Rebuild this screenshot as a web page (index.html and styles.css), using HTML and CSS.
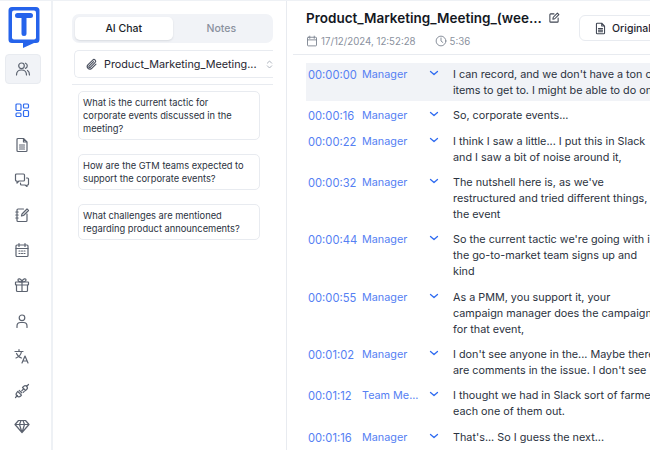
FILE: index.html
```html
<!DOCTYPE html>
<html lang="en">
<head>
    <meta charset="UTF-8">
    <title>Transcript</title>
    <link rel="stylesheet" href="styles.css">
</head>
<body>
    <div class="app">
        <nav class="sidebar">
            <svg class="logo" width="32" height="42" viewBox="0 0 32 42">
                <path d="M4 1h24a3.500 3.500 0 0 1 3.500 3.500v29a3.500 3.500 0 0 1-3.500 3.500h-2l-11 5v-5H4a3.500 3.500 0 0 1-3.500-3.500v-29A3.500 3.500 0 0 1 4 1z" fill="#2563eb"/>
                <rect x="4" y="4.500" width="24" height="29" rx="2" fill="#fff"/>
                <path d="M9.500 7h13a2.500 2.500 0 0 1 0 5h-4v15.500a2.500 2.500 0 0 1-5 0V12h-4a2.500 2.500 0 0 1 0-5z" fill="#2563eb"/>
            </svg>
            <div class="nav-active">
                <svg class="icon" viewBox="0 0 16 16"><circle cx="6.500" cy="4.800" r="2.800"/><path d="M1.500 14c0-3 2-5 5-5s5 2 5 5M10.500 2.200a2.800 2.800 0 0 1 0 5.200M12.500 9.500c1.300.8 2 2.400 2 4.500"/></svg>
            </div>
            <div class="nav-list">
                <svg class="icon icon-blue" viewBox="0 0 16 16"><rect x="2" y="2" width="5" height="6.500" rx="1"/><rect x="9.500" y="2" width="5" height="4" rx="1"/><rect x="2" y="11" width="5" height="3.500" rx="1"/><rect x="9.500" y="8.500" width="5" height="6" rx="1"/></svg>
                <svg class="icon" viewBox="0 0 16 16"><path d="M3 2.500a1 1 0 0 1 1-1h5.500L13 5v8.500a1 1 0 0 1-1 1H4a1 1 0 0 1-1-1zM9.500 1.500V5H13M5.500 8h5M5.500 10h5M5.500 12h5"/></svg>
                <svg class="icon" viewBox="0 0 16 16"><path d="M1.500 3a1 1 0 0 1 1-1h7a1 1 0 0 1 1 1v5a1 1 0 0 1-1 1H5l-2 2V9h-.5a1 1 0 0 1-1-1zM12.500 6h1a1 1 0 0 1 1 1v5a1 1 0 0 1-1 1H13v1.500L11 13H7.500a1 1 0 0 1-1-1v-1"/></svg>
                <svg class="icon" viewBox="0 0 16 16"><path d="M9.500 2H4a1 1 0 0 0-1 1v10.500a1 1 0 0 0 1 1h8a1 1 0 0 0 1-1V7M1.800 5h2.400M1.800 8h2.400M1.800 11h2.400M7.500 9l.5-2L13 2l1.500 1.500-5 5z"/></svg>
                <svg class="icon" viewBox="0 0 16 16"><rect x="2" y="3" width="12" height="11.500" rx="1"/><path d="M2 6.500h12M5 1.500v3M11 1.500v3M5 9h1M7.500 9h1M10 9h1M5 11.500h1M7.500 11.500h1M10 11.500h1"/></svg>
                <svg class="icon" viewBox="0 0 16 16"><rect x="1.500" y="5" width="13" height="3" rx=".5"/><path d="M2.500 8v5.500a1 1 0 0 0 1 1h9a1 1 0 0 0 1-1V8M8 5v9.500M8 5C6 5 4 4.500 4 3s3-2 4 2c1-4 4-3.500 4-2s-2 2-4 2"/></svg>
                <svg class="icon" viewBox="0 0 16 16"><circle cx="8" cy="4.800" r="2.800"/><path d="M3 14.500v-1.500c0-2 1.500-3.500 3.500-3.500h3c2 0 3.500 1.500 3.500 3.500v1.500"/></svg>
                <svg class="icon" viewBox="0 0 16 16"><path d="M1 3.500h8M5 1.500v2M7.500 3.500c-.5 3-3 5.500-5.500 6.500M2.500 5.500c1 2 3 4 5 4.500M8 15l3-7 3 7M9 13h4"/></svg>
                <svg class="icon" viewBox="0 0 16 16"><path d="M1.500 14.500L3.500 12.500M3.800 8.500l3.700 3.700-.8.800a2.600 2.600 0 0 1-3.700-3.700zM5.200 7.300L7.700 9.800M12.500 3.500l2-2M8.500 4.500l3 3 1.200-1.200a2.100 2.100 0 0 0-3-3zM9 6.500L7.700 7.800M10.300 8.300L9.200 9.400"/></svg>
                <svg class="icon" viewBox="0 0 16 16"><path d="M4.500 2.500h7L15 6.500 8 14.500 1 6.500zM1 6.500h14M5.500 6.500L8 14.500l2.500-8M5.500 6.500L7 2.500M10.500 6.500L9 2.500"/></svg>
            </div>
        </nav>

        <section class="chat">
            <div class="tabs">
                <div class="tab tab-active">AI Chat</div>
                <div class="tab">Notes</div>
            </div>
            <div class="file-select">
                <svg class="clip" viewBox="0 0 16 16"><path d="M13.500 7.500l-5.500 5.500a3.200 3.200 0 0 1-4.500-4.500l6-6a2.100 2.100 0 0 1 3 3l-6 6a1 1 0 0 1-1.500-1.500l5.500-5.500"/></svg>
                <span class="file-name">Product_Marketing_Meeting...</span>
                <svg class="updown" viewBox="0 0 8 12"><path d="M1.500 4.500L4 2l2.500 2.500M1.500 7.500L4 10l2.500-2.500"/></svg>
            </div>
            <div class="suggestions">
                <div class="card">What is the current tactic for corporate events discussed in the meeting?</div>
                <div class="card">How are the GTM teams expected to support the corporate events?</div>
                <div class="card">What challenges are mentioned regarding product announcements?</div>
            </div>
        </section>

        <main class="transcript">
            <header class="head">
                <div class="head-info">
                    <div class="title-row">
                        <h1>Product_Marketing_Meeting_(wee...</h1>
                        <svg class="edit" viewBox="0 0 16 16"><path d="M8 2.500H3.500a1 1 0 0 0-1 1v9a1 1 0 0 0 1 1h9a1 1 0 0 0 1-1V8M6.500 9.500l.5-2.500 5.500-5.500 2 2L9 9z"/></svg>
                    </div>
                    <div class="meta">
                        <svg viewBox="0 0 16 16"><rect x="2" y="3" width="12" height="11.500" rx="1"/><path d="M2 6.500h12M5 1.500v3M11 1.500v3"/></svg>
                        <span class="date">17/12/2024, 12:52:28</span>
                        <svg viewBox="0 0 16 16"><circle cx="8" cy="8" r="6.500"/><path d="M8 4v4l2.500 2"/></svg>
                        <span>5:36</span>
                    </div>
                </div>
                <div class="original">
                    <svg viewBox="0 0 16 16"><path d="M3 2.500a1 1 0 0 1 1-1h5.500L13 5v8.500a1 1 0 0 1-1 1H4a1 1 0 0 1-1-1zM9.500 1.500V5H13M5.500 8h5M5.500 10h5M5.500 12h5"/></svg>
                    <span>Original</span>
                </div>
            </header>
            <div class="rows">
                <div class="row row-current">
                    <span class="time">00:00:00</span><span class="speaker">Manager</span>
                    <svg class="chev" viewBox="0 0 10 6"><path d="M1.500 1.500L5 4.500l3.500-3"/></svg>
                    <p>I can record, and we don't have a ton of<br>items to get to. I might be able to do on</p>
                </div>
                <div class="row">
                    <span class="time">00:00:16</span><span class="speaker">Manager</span>
                    <svg class="chev" viewBox="0 0 10 6"><path d="M1.500 1.500L5 4.500l3.500-3"/></svg>
                    <p>So, corporate events...</p>
                </div>
                <div class="row">
                    <span class="time">00:00:22</span><span class="speaker">Manager</span>
                    <svg class="chev" viewBox="0 0 10 6"><path d="M1.500 1.500L5 4.500l3.500-3"/></svg>
                    <p>I think I saw a little... I put this in Slack<br>and I saw a bit of noise around it,</p>
                </div>
                <div class="row">
                    <span class="time">00:00:32</span><span class="speaker">Manager</span>
                    <svg class="chev" viewBox="0 0 10 6"><path d="M1.500 1.500L5 4.500l3.500-3"/></svg>
                    <p>The nutshell here is, as we've<br>restructured and tried different things,<br>the event</p>
                </div>
                <div class="row">
                    <span class="time">00:00:44</span><span class="speaker">Manager</span>
                    <svg class="chev" viewBox="0 0 10 6"><path d="M1.500 1.500L5 4.500l3.500-3"/></svg>
                    <p>So the current tactic we're going with is<br>the go-to-market team signs up and<br>kind</p>
                </div>
                <div class="row">
                    <span class="time">00:00:55</span><span class="speaker">Manager</span>
                    <svg class="chev" viewBox="0 0 10 6"><path d="M1.500 1.500L5 4.500l3.500-3"/></svg>
                    <p>As a PMM, you support it, your<br>campaign manager does the campaign<br>for that event,</p>
                </div>
                <div class="row">
                    <span class="time">00:01:02</span><span class="speaker">Manager</span>
                    <svg class="chev" viewBox="0 0 10 6"><path d="M1.500 1.500L5 4.500l3.500-3"/></svg>
                    <p>I don't see anyone in the... Maybe there<br>are comments in the issue. I don't see</p>
                </div>
                <div class="row">
                    <span class="time">00:01:12</span><span class="speaker">Team Me...</span>
                    <svg class="chev" viewBox="0 0 10 6"><path d="M1.500 1.500L5 4.500l3.500-3"/></svg>
                    <p>I thought we had in Slack sort of farmed<br>each one of them out.</p>
                </div>
                <div class="row">
                    <span class="time">00:01:16</span><span class="speaker">Manager</span>
                    <svg class="chev" viewBox="0 0 10 6"><path d="M1.500 1.500L5 4.500l3.500-3"/></svg>
                    <p>That's... So I guess the next...</p>
                </div>
            </div>
        </main>
    </div>
</body>
</html>
```
FILE: styles.css
```css
html, body {
    margin: 0;
    height: 100%;
    overflow: hidden;
    background-color: #fff;
    font-family: Inter, "Liberation Sans", sans-serif;
}

.app {
    display: flex;
    width: 650px;
    height: 450px;
    overflow: hidden;
    border-top: 1px solid #eef1f5;
    box-sizing: border-box;
}

svg {
    fill: none;
    stroke-linecap: round;
    stroke-linejoin: round;
}

.sidebar {
    width: 53px;
    flex: none;
    box-sizing: border-box;
    border-right: 2px solid #eef1f5;
    display: flex;
    flex-direction: column;
    align-items: center;
    padding-top: 5px;
    padding-right: 8px;
}

.logo {
    flex: none;
    margin-left: 4px;
}

.nav-active {
    width: 36px;
    height: 30px;
    margin: 6px 0 0 3px;
    background-color: #f1f3f7;
    border: 1px solid #e8ebf0;
    border-radius: 4px;
    box-sizing: border-box;
    display: flex;
    align-items: center;
    justify-content: center;
}

.nav-list {
    display: flex;
    flex-direction: column;
    align-items: center;
    gap: 19.100px;
    margin-top: 18px;
}

.icon {
    width: 16px;
    height: 16px;
    stroke: #5c6370;
    stroke-width: 1.200;
    flex: none;
}

.icon-blue {
    stroke: #2f6bf0;
}

.chat {
    width: 234px;
    flex: none;
    box-sizing: border-box;
    border-right: 1px solid #e8ebf0;
    padding: 13px 13px 0 19px;
}

.tabs {
    display: flex;
    height: 29px;
    padding: 3px;
    box-sizing: border-box;
    background-color: #f1f3f7;
    border-radius: 7px;
}

.tab {
    flex: 1;
    display: flex;
    align-items: center;
    justify-content: center;
    font-size: 10.500px;
    font-weight: 500;
    color: #8a919e;
}

.tab-active {
    background-color: #fff;
    color: #1a1f2b;
    border-radius: 5px;
    box-shadow: 0 1px 2px rgba(30, 40, 60, 0.12);
}

.file-select {
    display: flex;
    align-items: center;
    height: 28px;
    margin: 7px 0 0 2px;
    padding-left: 10px;
    box-sizing: border-box;
    border: 1px solid #e8ebf0;
    border-right: none;
    border-radius: 5px 0 0 5px;
}

.clip {
    width: 13px;
    height: 13px;
    stroke: #4b5160;
    stroke-width: 1.400;
    flex: none;
}

.file-name {
    margin-left: 6px;
    font-size: 10.800px;
    color: #1f2530;
    white-space: nowrap;
}

.updown {
    width: 7px;
    height: 11px;
    margin-left: 9px;
    stroke: #a4aab5;
    stroke-width: 1;
    flex: none;
}

.suggestions {
    margin-top: 6px;
    padding: 6px 0 0 6px;
    border-top: 1px solid #e8ebf0;
    display: flex;
    flex-direction: column;
    gap: 14px;
}

.card {
    width: 182px;
    box-sizing: border-box;
    padding: 4px 11px 4px 4px;
    border: 1px solid #e8ebf0;
    border-radius: 5px;
    font-size: 9.300px;
    line-height: 13px;
    color: #2b3240;
}

.transcript {
    flex: 1;
    min-width: 0;
    overflow: hidden;
}

.head {
    display: flex;
    height: 54px;
    margin-left: 6px;
    padding-left: 13px;
    box-sizing: border-box;
    border-bottom: 1px solid #e8ebf0;
}

.head-info {
    width: 273px;
    flex: none;
}

.title-row {
    display: flex;
    align-items: center;
    height: 18px;
    margin-top: 8px;
}

h1 {
    margin: 0;
    font-size: 13.500px;
    font-weight: 600;
    color: #14181f;
    white-space: nowrap;
}

.edit {
    width: 12px;
    height: 12px;
    margin-left: 6px;
    stroke: #3f4552;
    stroke-width: 1.400;
    flex: none;
}

.meta {
    display: flex;
    align-items: center;
    margin-top: 8px;
    font-size: 9.700px;
    color: #8a919e;
    white-space: nowrap;
}

.meta svg {
    width: 12px;
    height: 12px;
    margin-right: 3px;
    stroke: #7c8390;
    stroke-width: 1.200;
    flex: none;
}

.date {
    margin-right: 19px;
}

.original {
    display: flex;
    align-items: center;
    width: 90px;
    height: 26px;
    margin-top: 14px;
    padding-left: 14px;
    box-sizing: border-box;
    flex: none;
    border: 1px solid #e8ebf0;
    border-radius: 6px;
    font-size: 10.500px;
    font-weight: 500;
    color: #1f2530;
}

.original svg {
    width: 13px;
    height: 13px;
    margin-right: 5px;
    stroke: #3f4552;
    stroke-width: 1.300;
    flex: none;
}

.rows {
    margin: 8px 0 0 19px;
    display: flex;
    flex-direction: column;
    gap: 3.350px;
}

.row {
    display: flex;
    align-items: flex-start;
    padding: 4px 0 2px 2px;
    font-size: 10.800px;
    line-height: 16px;
    white-space: nowrap;
}

.row-current {
    background-color: #f1f3f7;
}

.time {
    width: 54px;
    flex: none;
    font-size: 11.200px;
    color: #5580f3;
}

.speaker {
    width: 68px;
    flex: none;
    color: #5580f3;
}

.chev {
    width: 10px;
    height: 6px;
    margin: 3px 0 0 -1px;
    stroke: #2f6bf0;
    stroke-width: 1.300;
    flex: none;
}

.row p {
    margin: 0 0 0 14px;
    color: #2b3240;
}
```
